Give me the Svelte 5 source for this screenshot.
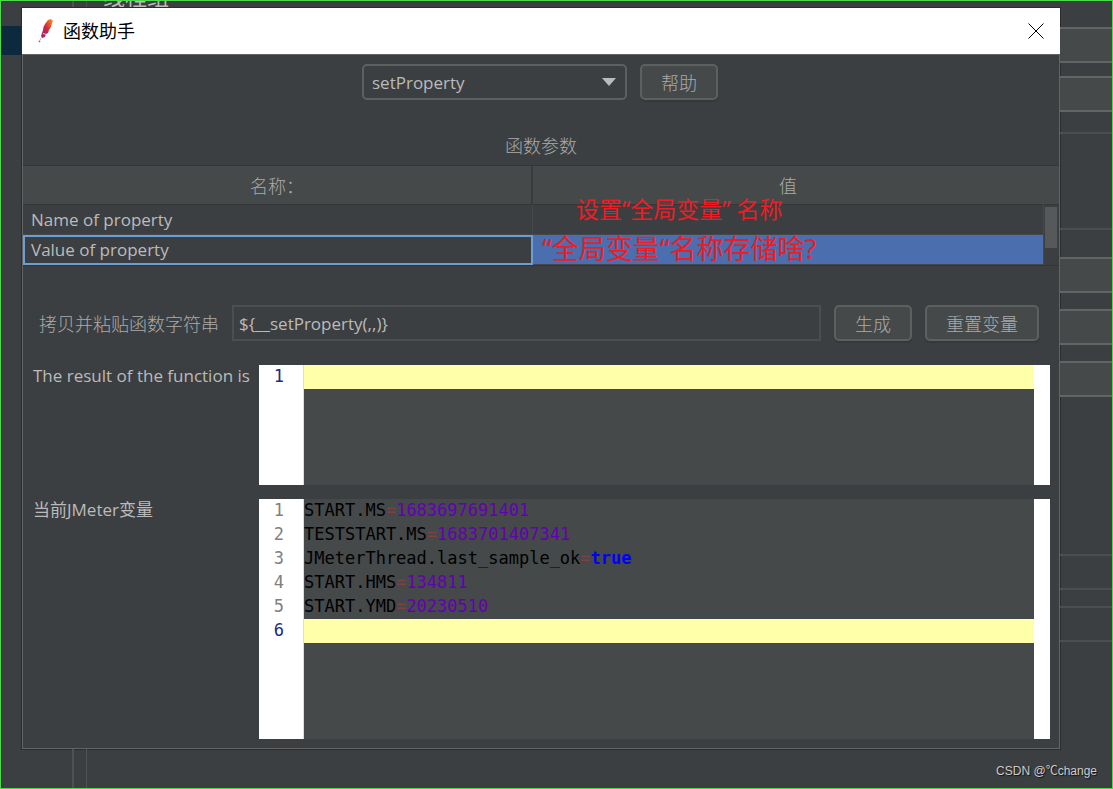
<script>
    const functions = ['setProperty', 'property', 'P', 'eval', 'counter'];

    let selectedFunction = $state('setProperty');
    let functionString = $state('${__setProperty(,,)}');
    let selectedRow = $state(1);

    const params = ['Name of property', 'Value of property'];

    const variables = [
        { name: 'START.MS', value: '1683697691401' },
        { name: 'TESTSTART.MS', value: '1683701407341' },
        { name: 'JMeterThread.last_sample_ok', value: 'true', keyword: true },
        { name: 'START.HMS', value: '134811' },
        { name: 'START.YMD', value: '20230510' }
    ];

    function generate() {
        functionString = '${__' + selectedFunction + '(,,)}';
    }
</script>

<div class="desktop">
    <div class="behind-top">
        <div class="splitter"></div>
        <span class="behind-title">线程组</span>
    </div>

    <div class="behind-left">
        <div class="tree-row"></div>
    </div>

    <main class="dialog">
        <header class="titlebar">
            <svg class="feather" viewBox="0 0 16 24" aria-hidden="true">
                <defs>
                    <linearGradient id="plume" x1="1" y1="0" x2="0" y2="1">
                        <stop offset="0" stop-color="#f7a11b" />
                        <stop offset="0.3" stop-color="#e5532b" />
                        <stop offset="0.55" stop-color="#cf1f45" />
                        <stop offset="1" stop-color="#8b2c82" />
                    </linearGradient>
                </defs>
                <path
                    d="M10 1 L13 0 L15 2 L14 4 L13.500 6 L12.500 9 L11 11 L10 14 L8 15 L7 18 L4 19 L3 17 L4 14 L5 11 L5.500 8 L7 5 L8.500 3 Z"
                    fill="url(#plume)"
                />
                <path d="M5 14.500 L8.500 15.500" fill="none" stroke="#fff" stroke-width="1" opacity="0.700" />
                <path d="M3.500 18.500 L2 21" stroke="#b6b0d6" stroke-width="1" />
                <circle cx="1.500" cy="22.300" r="0.900" fill="#6a5fa5" />
            </svg>
            <h1>函数助手</h1>
            <button class="close" type="button" aria-label="关闭">
                <svg viewBox="0 0 16 16" aria-hidden="true">
                    <path d="M0.500 0.500 L15.500 15.500 M15.500 0.500 L0.500 15.500" stroke="#000" stroke-width="1" />
                </svg>
            </button>
        </header>

        <div class="body">
            <div class="picker">
                <div class="combo">
                    <select aria-label="函数" bind:value={selectedFunction}>
                        {#each functions as fn}
                            <option value={fn}>{fn}</option>
                        {/each}
                    </select>
                    <svg viewBox="0 0 14 8" aria-hidden="true">
                        <path d="M0 0 H14 L7 8 Z" fill="#bbb" />
                    </svg>
                </div>
                <button type="button">帮助</button>
            </div>

            <h2>函数参数</h2>

            <div class="params">
                <table>
                    <thead>
                        <tr>
                            <th>名称：</th>
                            <th>值</th>
                        </tr>
                    </thead>
                    <tbody>
                        {#each params as param, i}
                            <tr class:selected={selectedRow === i} onclick={() => (selectedRow = i)}>
                                <td>{param}</td>
                                <td></td>
                            </tr>
                        {/each}
                    </tbody>
                </table>
                <div class="side">
                    <div class="corner"></div>
                    <div class="thumb"></div>
                </div>
                <span class="note note-name">设置“全局变量” 名称</span>
                <span class="note note-value">“全局变量“名称存储啥?</span>
            </div>

            <div class="copy-row">
                <label for="function-string">拷贝并粘贴函数字符串</label>
                <input id="function-string" type="text" bind:value={functionString} />
                <button type="button" onclick={generate}>生成</button>
                <button type="button" class="wide">重置变量</button>
            </div>

            <div class="outputs">
                <span class="output-label">The result of the function is</span>
                <div class="editor short">
                    <div class="gutter"><span class="current">1</span></div>
                    <div class="code"><div class="line current"></div></div>
                    <div class="strip"></div>
                </div>

                <span class="output-label">当前JMeter变量</span>
                <div class="editor">
                    <div class="gutter">
                        {#each variables as _, i}
                            <span>{i + 1}</span>
                        {/each}
                        <span class="current">{variables.length + 1}</span>
                    </div>
                    <div class="code">
                        {#each variables as v}
                            <div class="line">{v.name}<span class="eq">=</span><span class="value" class:keyword={v.keyword}>{v.value}</span></div>
                        {/each}
                        <div class="line current"></div>
                    </div>
                    <div class="strip"></div>
                </div>
            </div>
        </div>
    </main>

    <div class="behind-right">
        <div class="group first">
            <div class="field"></div>
            <div class="field"></div>
        </div>
        <div class="panel"></div>
        <div class="group">
            <div class="field"></div>
            <div class="field"></div>
            <div class="field"></div>
        </div>
        <div class="group last">
            <div class="field disabled"></div>
            <div class="field disabled"></div>
        </div>
    </div>

    <footer class="behind-bottom">
        <div class="splitter"></div>
        <span class="watermark">CSDN @℃change</span>
    </footer>
</div>

<style>
    :global(body) {
        margin: 0;
        background: #3c3f41;
    }

    * {
        box-sizing: border-box;
    }

    .desktop {
        display: grid;
        grid-template-columns: 21px 1fr 52px;
        grid-template-rows: 7px auto 1fr;
        min-height: 100vh;
        border: 1px solid #4bdb4b;
        background: #3c3f41;
        color: #bbb;
        font-family: "Open Sans", "Noto Sans CJK SC", sans-serif;
        font-size: 17px;
    }

    /* main window behind the dialog */
    .behind-top,
    .behind-bottom {
        grid-column: 1 / -1;
        display: flex;
        overflow: hidden;
        padding-left: 71px;
    }

    .splitter {
        width: 15px;
        border: solid #515151;
        border-width: 0 1px 0 2px;
    }

    .behind-title {
        align-self: flex-end;
        margin-left: 16px;
        font-size: 22px;
        line-height: 24px;
    }

    .tree-row {
        height: 29px;
        margin-top: 18px;
        background: #0d293e;
    }

    .behind-right {
        padding-top: 19px;
    }

    .group {
        display: grid;
        gap: 16px;
    }

    .group.first {
        gap: 13px;
    }

    .group.last {
        margin-top: 157px;
    }

    .field {
        height: 36px;
        border: solid #646464;
        border-width: 2px 0;
        background: #45494a;
    }

    .field.disabled {
        border-color: #4d4d4d;
        background: none;
    }

    .panel {
        height: 98px;
        margin: 20px 0 27px;
        border: solid #4d4d4d;
        border-width: 2px 0;
    }

    .behind-bottom {
        justify-content: space-between;
        padding-right: 15px;
    }

    .watermark {
        align-self: center;
        padding-top: 4px;
        color: #ccc;
        font-family: "Liberation Sans", "Noto Sans CJK SC", sans-serif;
        font-size: 12px;
        line-height: 20px;
        text-shadow: 1px 1px 1px #111;
    }

    /* dialog */
    .dialog {
        box-shadow: 0 0 0 1px #2b2c2d;
        background: #3c3f41;
    }

    .titlebar {
        display: flex;
        align-items: center;
        height: 46px;
        padding: 0 16px;
        background: #fff;
        color: #000;
    }

    .feather {
        width: 16px;
        height: 24px;
    }

    h1 {
        flex: 1;
        margin: 0 0 0 9px;
        font-size: 18px;
        font-weight: 400;
        line-height: 24px;
    }

    .close {
        display: flex;
        width: 16px;
        height: 16px;
        padding: 0;
        border: none;
        border-radius: 0;
        background: none;
        box-shadow: none;
    }

    .body {
        padding: 9px 0;
        border: 1px solid #646464;
    }

    .picker {
        display: flex;
        justify-content: center;
        gap: 13px;
        padding-right: 2px;
    }

    .combo {
        position: relative;
        width: 265px;
    }

    .combo svg {
        position: absolute;
        top: 14px;
        right: 11px;
        width: 14px;
        height: 8px;
        pointer-events: none;
    }

    select,
    input {
        width: 100%;
        height: 36px;
        border: 2px solid #5e6060;
        background: #3c3f41;
        color: #bbb;
        font: inherit;
        outline: none;
    }

    select {
        appearance: none;
        padding: 0 8px;
        border-radius: 5px;
    }

    input {
        flex: 1;
        min-width: 0;
        padding: 0 5px;
        border-color: #4d4e4f;
    }

    button {
        width: 78px;
        height: 36px;
        padding: 0;
        border: 2px solid #5e6060;
        border-radius: 5px;
        background: #45494a;
        box-shadow: 0 2px 1px #36393a;
        color: #aaa;
        font: inherit;
        font-size: 18px;
        font-weight: 300;
    }

    button.wide {
        width: 114px;
    }

    h2 {
        margin: 34px 0 7px;
        color: #aaa;
        font-size: 18px;
        font-weight: 300;
        line-height: 24px;
        text-align: center;
    }

    .params {
        position: relative;
        display: flex;
        border: solid #323435;
        border-width: 1px 0;
    }

    table {
        flex: 1;
        width: 100%;
        border-collapse: separate;
        border-spacing: 0;
        table-layout: fixed;
    }

    th {
        height: 39px;
        padding: 0;
        border-bottom: 1px solid #353739;
        background: #45494a;
        color: #aaa;
        font-size: 18px;
        font-weight: 300;
    }

    th:first-child {
        border-right: 2px solid #393b3d;
    }

    td {
        height: 30px;
        padding: 0 8px;
        border-bottom: 1px solid #46494b;
        line-height: 24px;
    }

    td:first-child {
        border-right: 1px solid #46494b;
    }

    tr.selected td {
        background: #4b6eaf;
    }

    tr.selected td:first-child {
        padding: 0 6px;
        border: 2px solid #6a9fd5;
        background: #3c3f41;
    }

    .side {
        flex: none;
        width: 16px;
        border-left: 1px solid #46494b;
    }

    .corner {
        height: 39px;
        border-bottom: 1px solid #353739;
        background: #45494a;
    }

    .thumb {
        height: 41px;
        margin: 2px 2px 17px 1px;
        background: #575859;
    }

    .note {
        position: absolute;
        color: #ee1c25;
        font-family: "Noto Sans", "Noto Sans CJK SC", sans-serif;
        white-space: nowrap;
    }

    .note-name {
        top: 28px;
        left: 553px;
        font-size: 23px;
        line-height: 30px;
    }

    .note-value {
        top: 65px;
        left: 519px;
        font-size: 27px;
        line-height: 36px;
    }

    .copy-row {
        display: flex;
        align-items: center;
        gap: 13px;
        margin: 39px 20px 24px 16px;
    }

    .copy-row label {
        color: #aaa;
        font-size: 18px;
        font-weight: 300;
    }

    .outputs {
        display: grid;
        grid-template-columns: 226px 1fr;
        gap: 14px 0;
        padding: 0 9px 0 10px;
    }

    .output-label {
        line-height: 22px;
    }

    .editor {
        display: grid;
        grid-template-columns: 45px 1fr 16px;
        height: 240px;
        background: #45494a;
        font-family: "DejaVu Sans Mono", monospace;
        line-height: 22px;
    }

    .editor.short {
        height: 120px;
    }

    .gutter {
        padding-right: 19px;
        border-right: 1px solid #ddd;
        background: #fff;
        color: #808080;
        text-align: right;
    }

    .gutter span {
        display: block;
        height: 24px;
    }

    .gutter .current {
        color: #1c2c80;
    }

    .code {
        overflow: hidden;
        color: #000;
    }

    .line {
        height: 24px;
        white-space: pre;
    }

    .line.current {
        background: #ffffaa;
    }

    .eq {
        color: #804040;
    }

    .value {
        color: #6400b4;
    }

    .value.keyword {
        color: #00f;
        font-weight: 700;
    }

    .strip {
        background: #fff;
    }
</style>
